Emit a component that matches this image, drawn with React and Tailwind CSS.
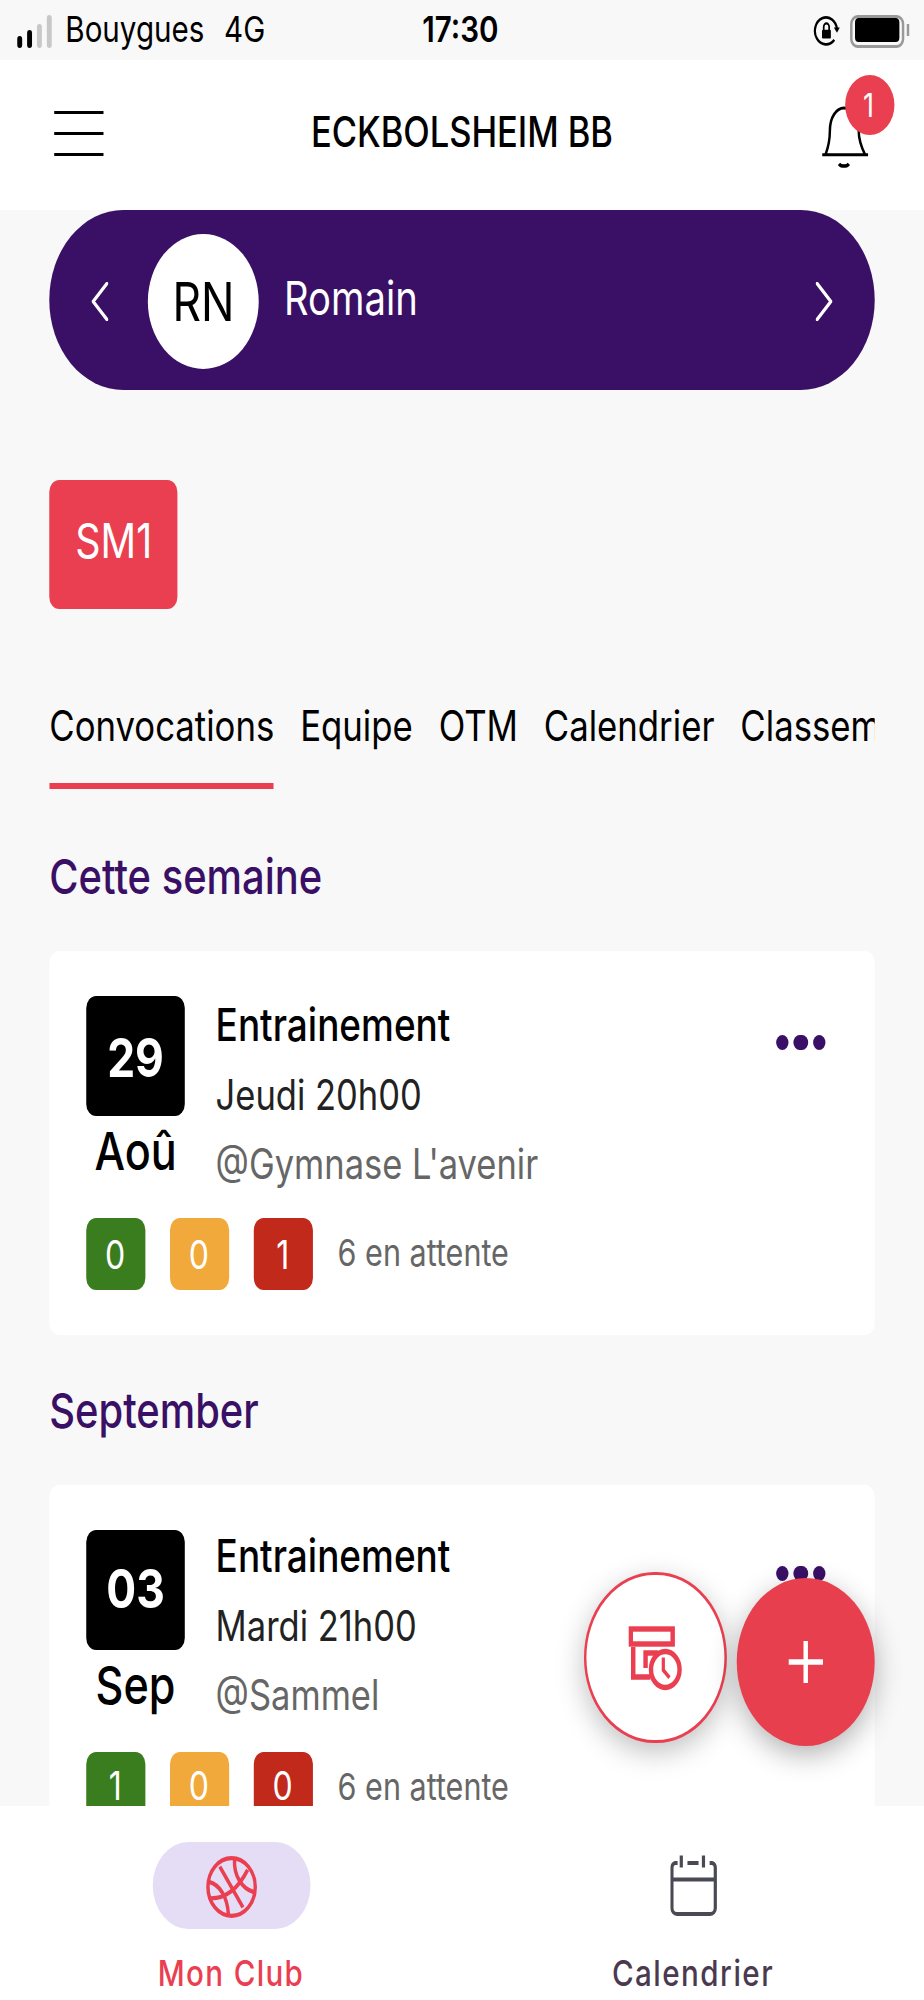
const cards = [
  { day: '29', month: 'Aoû', time: 'Jeudi 20h00', place: "@Gymnase L'avenir", counts: [0, 0, 1] },
  { day: '03', month: 'Sep', time: 'Mardi 21h00', place: '@Sammel', counts: [1, 0, 0] },
];

const tabs = ['Convocations', 'Equipe', 'OTM', 'Calendrier', 'Classement'];

function StatusBar() {
  return (
    <div className="relative flex h-[20px] shrink-0 items-center bg-[#f8f8f8] pl-[6.5px] pr-[6px] text-[12px] text-black">
      {/* signal */}
      <div className="flex h-[11px] items-end gap-[1.5px]">
        <span className="h-[3.5px] w-[2.5px] rounded-[1px] bg-black" />
        <span className="h-[5.5px] w-[2.5px] rounded-[1px] bg-black" />
        <span className="h-[8px] w-[2.5px] rounded-[1px] bg-[#c8c8c8]" />
        <span className="h-[10.5px] w-[2.5px] rounded-[1px] bg-[#c8c8c8]" />
      </div>
      <span className="ml-[5.5px]">Bouygues</span>
      <span className="ml-[8px]">4G</span>
      <span className="flex-1 pr-[64px] text-center font-semibold">17:30</span>
      <svg width="11" height="11" viewBox="0 0 11 11" fill="none" stroke="black" className="mr-[4px]">
        <path d="M8.6 8.3A4.5 4.5 0 1 1 9.7 4.8" strokeWidth="0.9" />
        <path d="M8.4 4.2h2.4L9.7 5.9z" fill="black" stroke="none" />
        <rect x="3.6" y="4.9" width="3.6" height="2.9" rx="0.4" fill="black" stroke="none" />
        <path d="M4.3 5V3.9a1.1 1.1 0 0 1 2.2 0V5" strokeWidth="0.7" />
      </svg>
      <div className="flex items-center">
        <div className="flex h-[11px] w-[22px] items-center justify-center rounded-[3px] border border-[#999]">
          <div className="h-[8px] w-[18px] rounded-[1.5px] bg-black" />
        </div>
        <div className="ml-[1px] h-[4px] w-[1px] bg-[#999]" />
      </div>
    </div>
  );
}

function Header() {
  return (
    <div className="flex h-[50px] shrink-0 items-center justify-between bg-white pl-[22px] pr-[22px]">
      <div className="mb-[1px] flex w-[20px] flex-col gap-[5.8px]">
        <span className="h-[1.2px] bg-black" />
        <span className="h-[1.2px] bg-black" />
        <span className="h-[1.2px] bg-black" />
      </div>
      <span className="mb-[2.5px] text-[14px] font-medium tracking-[-0.02px] text-black">ECKBOLSHEIM BB</span>
      <div className="relative h-[24px] w-[20px]">
        <svg width="20" height="24" viewBox="0 0 20 24" fill="none" stroke="black" strokeWidth="1" className="absolute left-[0px] top-[2px]">
          <path d="M0.7 16.6h18.600M2 16.6c1.400-3 1.800-5 1.800-8C3.800 4 6.500 1 9.500 1s6 3 6 7.600c0 3 .8 5 2.600 8" />
          <path d="M7.500 19.600c.8 1 3.200 1 4 0" strokeWidth="1.200" />
        </svg>
        <span className="absolute left-[9.5px] top-[-8px] flex h-[20px] w-[20px] items-center justify-center rounded-full bg-[#ea3f50] text-[11px] text-white">
          1
        </span>
      </div>
    </div>
  );
}

function Chevron({ dir }) {
  return (
    <svg width="7" height="13" viewBox="0 0 7 13" fill="none" stroke="white" strokeWidth="1.200" strokeLinecap="round" strokeLinejoin="round">
      <path d={dir === 'left' ? 'M6.400 .5L.8 6.500l5.600 6' : 'M.6 .5l5.600 6-5.600 6'} />
    </svg>
  );
}

function PlayerPill() {
  return (
    <div className="flex h-[60px] shrink-0 items-center justify-between rounded-full bg-[#3a1066] pl-[17px] pr-[17px] text-white">
      <div className="flex items-center">
        <Chevron dir="left" />
        <div className="ml-[16.3px] flex h-[45px] w-[44.5px] items-center justify-center rounded-full bg-white text-[18px] text-black">
          RN
        </div>
        <span className="ml-[10.5px] text-[15.5px]">Romain</span>
      </div>
      <Chevron dir="right" />
    </div>
  );
}

function Tabs() {
  return (
    <div className="mt-[25px] flex h-[35px] shrink-0 gap-[10.5px] overflow-hidden text-[14.1px] text-black">
      {tabs.map((t, i) => (
        <div
          key={t}
          className={`shrink-0 pt-[2.8px] ${i === 0 ? 'border-b-2 border-[#ea3f50]' : ''}`}
        >
          {t}
        </div>
      ))}
    </div>
  );
}

function CountBadge({ value, color }) {
  return (
    <span className={`flex h-[24px] w-[24px] items-center justify-center rounded-[4px] pr-[0.5px] pt-[0.5px] text-[13px] text-white ${color}`}>
      {value}
    </span>
  );
}

function Card({ card }) {
  return (
    <div className="h-[127.5px] shrink-0 rounded-[4px] bg-white px-[15px] pt-[15px]">
      <div className="flex">
        <div className="flex w-[40px] shrink-0 flex-col items-center">
          <div className="flex h-[40px] w-[40px] items-center justify-center rounded-[4px] bg-black text-[18px] font-bold text-white">
            {card.day}
          </div>
          <span className="mt-[1px] text-[17.5px] font-medium leading-[22px] text-black">{card.month}</span>
        </div>
        <div className="ml-[12.5px] mt-[-2.5px] flex-1 leading-[23px]">
          <div className="text-[15px] font-medium text-black">Entrainement</div>
          <div className="text-[14px] text-[#222]">{card.time}</div>
          <div className="text-[14px] text-[#666]">{card.place}</div>
        </div>
        <div className="mr-[5px] mt-[12.5px] flex h-[5px] gap-[2px]">
          <span className="h-[5px] w-[5.5px] rounded-full bg-[#3a1066]" />
          <span className="h-[5px] w-[5.5px] rounded-full bg-[#3a1066]" />
          <span className="h-[5px] w-[5.5px] rounded-full bg-[#3a1066]" />
        </div>
      </div>
      <div className="mt-[7.2px] flex items-center gap-[10px]">
        <CountBadge value={card.counts[0]} color="bg-[#3a7d1e]" />
        <CountBadge value={card.counts[1]} color="bg-[#f2a93b]" />
        <CountBadge value={card.counts[2]} color="bg-[#c1291b]" />
        <span className="pt-[0.5px] text-[12.4px] text-[#666]">6 en attente</span>
      </div>
    </div>
  );
}

function BottomNav() {
  return (
    <div className="relative z-10 flex h-[65px] shrink-0 bg-white pt-[12px]">
      <div className="flex flex-1 flex-col items-center">
        <div className="flex h-[32px] w-[64px] items-center justify-center rounded-full bg-[#e5dcf5]">
          <svg width="24" height="24" viewBox="0 0 24 24" fill="none" stroke="#ea3f50" strokeWidth="1.400" className="mt-[1px]">
            <circle cx="12" cy="12" r="9.600" />
            <path d="M7.200 5.200L16.600 18.800" />
            <path d="M3 15.800c6 .2 11.500-3 15.500-9.500" />
            <path d="M13.200 2.800C12.800 8 16 12.500 21 13.700" />
            <path d="M2.800 10.300C7 11.200 10.200 15 10.700 21" />
          </svg>
        </div>
        <span className="mt-[6px] text-[12px] font-medium tracking-[0.55px] text-[#ea3f50]">Mon Club</span>
      </div>
      <div className="flex flex-1 flex-col items-center">
        <div className="flex h-[32px] items-center justify-center">
          <svg width="19" height="21" viewBox="0 0 19 21" fill="none" stroke="#4a4a55" strokeWidth="1.300">
            <path d="M3 3H2A1.500 1.500 0 0 0 .7 4.500V18a2 2 0 0 0 2 2h13.600a2 2 0 0 0 2-2V4.500A1.500 1.500 0 0 0 17 3h-1" />
            <path d="M.7 8.500h17.600" />
            <path d="M4.500 .5v4M13.500 .5v4M7 3h4.500" />
          </svg>
        </div>
        <span className="mt-[6px] text-[12px] font-medium tracking-[0.6px] text-[#4b3a4f]">Calendrier</span>
      </div>
    </div>
  );
}

export default function App() {
  return (
    <div className="h-[2000px] w-[924px] overflow-hidden">
      <div className="relative flex h-[666.67px] w-[375px] origin-top-left scale-x-[2.464] scale-y-[3] flex-col overflow-hidden bg-[#f8f8f8] font-['Inter',sans-serif]">
        <StatusBar />
        <Header />
        <div className="flex min-h-0 flex-1 flex-col overflow-hidden px-[20px]">
          <PlayerPill />
          <div className="mt-[30px] flex h-[43px] w-[52.3px] shrink-0 items-center justify-center rounded-[4px] bg-[#ea3f50] pb-[2.5px] text-[16px] text-white">
            SM1
          </div>
          <Tabs />
          <h2 className="mt-[19.3px] shrink-0 text-[16.2px] font-medium leading-[21px] text-[#3a1066]">Cette semaine</h2>
          <div className="mt-[14.2px]">
            <Card card={cards[0]} />
          </div>
          <h2 className="mt-[15px] shrink-0 text-[16.2px] font-medium leading-[21px] text-[#3a1066]">September</h2>
          <div className="mt-[14px]">
            <Card card={cards[1]} />
          </div>
        </div>
        <BottomNav />

        {/* floating actions */}
        <button className="absolute left-[236.5px] top-[523.7px] z-20 flex h-[57.5px] w-[58px] items-center justify-center rounded-full border border-[#ea3f50] bg-white shadow-[0_3px_10px_rgba(0,0,0,0.25)]">
          <svg width="22" height="22" viewBox="0 0 22 22" fill="none" stroke="#ea3f50" strokeWidth="1.800" className="ml-[1px] mt-[1px]">
            <rect x="1" y="1" width="17" height="5" />
            <path d="M2 7v10h7" />
            <path d="M7 14V9h5" />
            <ellipse cx="15" cy="14.500" rx="5.800" ry="6" fill="white" />
            <path d="M14.200 10.500v4.200l2.500 2.500" strokeWidth="1.300" />
          </svg>
        </button>
        <button className="absolute left-[299px] top-[525.8px] z-20 flex h-[56px] w-[56px] items-center justify-center rounded-full bg-[#e83f4f] shadow-[0_3px_10px_rgba(0,0,0,0.3)]">
          <svg width="14" height="14" viewBox="0 0 14 14" stroke="white" strokeWidth="1.800">
            <path d="M7 0v14M0 7h14" />
          </svg>
        </button>
      </div>
    </div>
  );
}
